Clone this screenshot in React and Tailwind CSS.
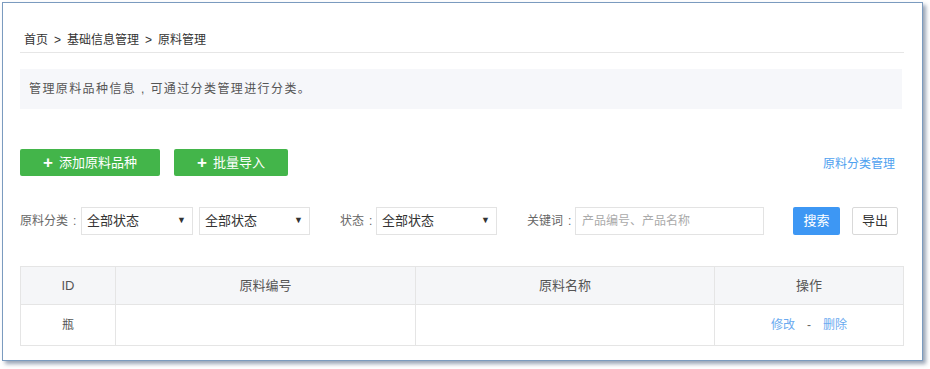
import React from "react";

const font = { fontFamily: '"Liberation Sans", "Noto Sans CJK SC", sans-serif' };

const Select = ({ width }) => (
  <div
    className={`flex items-center justify-between h-[28px] border border-[#e3e3e3] bg-white pl-[5px] pr-[6px] text-[13px] text-[#333] ${width}`}
  >
    <span>全部状态</span>
    <span className="text-[9px] text-[#333]">▼</span>
  </div>
);

const Label = ({ text, width }) => (
  <span className={`flex items-center ${width}`}>
    {text}
    <span className="ml-[5px]">:</span>
  </span>
);

const App = () => {
  return (
    <div className="w-[930px] h-[369px] bg-white pt-[2px] pl-[2px]" style={font}>
      <div className="w-[921px] h-[359px] border border-[#7b9bbf] bg-white shadow-[3px_3px_4px_rgba(70,90,120,0.55)] px-[17px]">
        {/* breadcrumb */}
        <div className="pt-[29px] pb-[4px] pl-[4px] text-[12px] leading-[16px] text-[#333] border-b border-[#e6e6e6] w-[884px]">
          首页<span className="mx-[6px]">&gt;</span>基础信息管理<span className="mx-[6px]">&gt;</span>原料管理
        </div>

        {/* info */}
        <div className="mt-[16px] h-[40px] w-[882px] bg-[#f6f7fa] flex items-center pl-[9px] text-[12px] text-[#555] tracking-[1.4px]">
          管理原料品种信息 , 可通过分类管理进行分类。
        </div>

        {/* actions */}
        <div className="mt-[40px] flex items-center w-[882px]">
          <button className="h-[27px] w-[140px] rounded-[2px] bg-[#43b54a] text-white text-[13px] flex items-center justify-center gap-[6px]">
            <span className="text-[17px] leading-none font-bold">+</span>
            <span>添加原料品种</span>
          </button>
          <button className="ml-[14px] h-[27px] w-[114px] rounded-[2px] bg-[#43b54a] text-white text-[13px] flex items-center justify-center gap-[6px]">
            <span className="text-[17px] leading-none font-bold">+</span>
            <span>批量导入</span>
          </button>
          <a className="ml-auto mr-[7px] mt-[3px] text-[12px] text-[#4ea1ef]">原料分类管理</a>
        </div>

        {/* filters */}
        <div className="mt-[31px] flex items-center text-[12px] text-[#666]">
          <Label text="原料分类" width="w-[61px]" />
          <Select width="w-[112px]" />
          <div className="ml-[6px]">
            <Select width="w-[111px]" />
          </div>
          <Label text="状态" width="ml-[30px] w-[36px]" />
          <Select width="w-[121px]" />
          <Label text="关键词" width="ml-[30px] w-[48px]" />
          <div className="h-[28px] w-[189px] border border-[#e3e3e3] flex items-center pl-[6px] text-[12px] text-[#aaa]">
            产品编号、产品名称
          </div>
          <button className="ml-[29px] h-[28px] w-[47px] rounded-[2px] bg-[#3d97f4] text-white text-[13px]">
            搜索
          </button>
          <button className="ml-[12px] h-[28px] w-[46px] rounded-[2px] border border-[#d9d9d9] bg-white text-[#333] text-[13px]">
            导出
          </button>
        </div>

        {/* table */}
        <div className="mt-[31px] w-[884px] border border-[#e5e5e5]">
          <div className="flex h-[38px] bg-[#f5f6f8] text-[13px] text-[#555] border-b border-[#e5e5e5]">
            <div className="w-[94px] flex items-center justify-center">ID</div>
            <div className="w-[300px] flex items-center justify-center border-l border-[#e5e5e5]">原料编号</div>
            <div className="w-[299px] flex items-center justify-center border-l border-[#e5e5e5]">原料名称</div>
            <div className="flex-1 flex items-center justify-center border-l border-[#e5e5e5]">操作</div>
          </div>
          <div className="flex h-[40px] text-[12px] text-[#555]">
            <div className="w-[94px] flex items-center justify-center">瓶</div>
            <div className="w-[300px] border-l border-[#e5e5e5]"></div>
            <div className="w-[299px] border-l border-[#e5e5e5]"></div>
            <div className="flex-1 flex items-center justify-center gap-[12px] border-l border-[#e5e5e5]">
              <a className="text-[#6aaaf0]">修改</a>
              <span className="text-[#666]">-</span>
              <a className="text-[#6aaaf0]">删除</a>
            </div>
          </div>
        </div>
      </div>
    </div>
  );
};

export default App;
